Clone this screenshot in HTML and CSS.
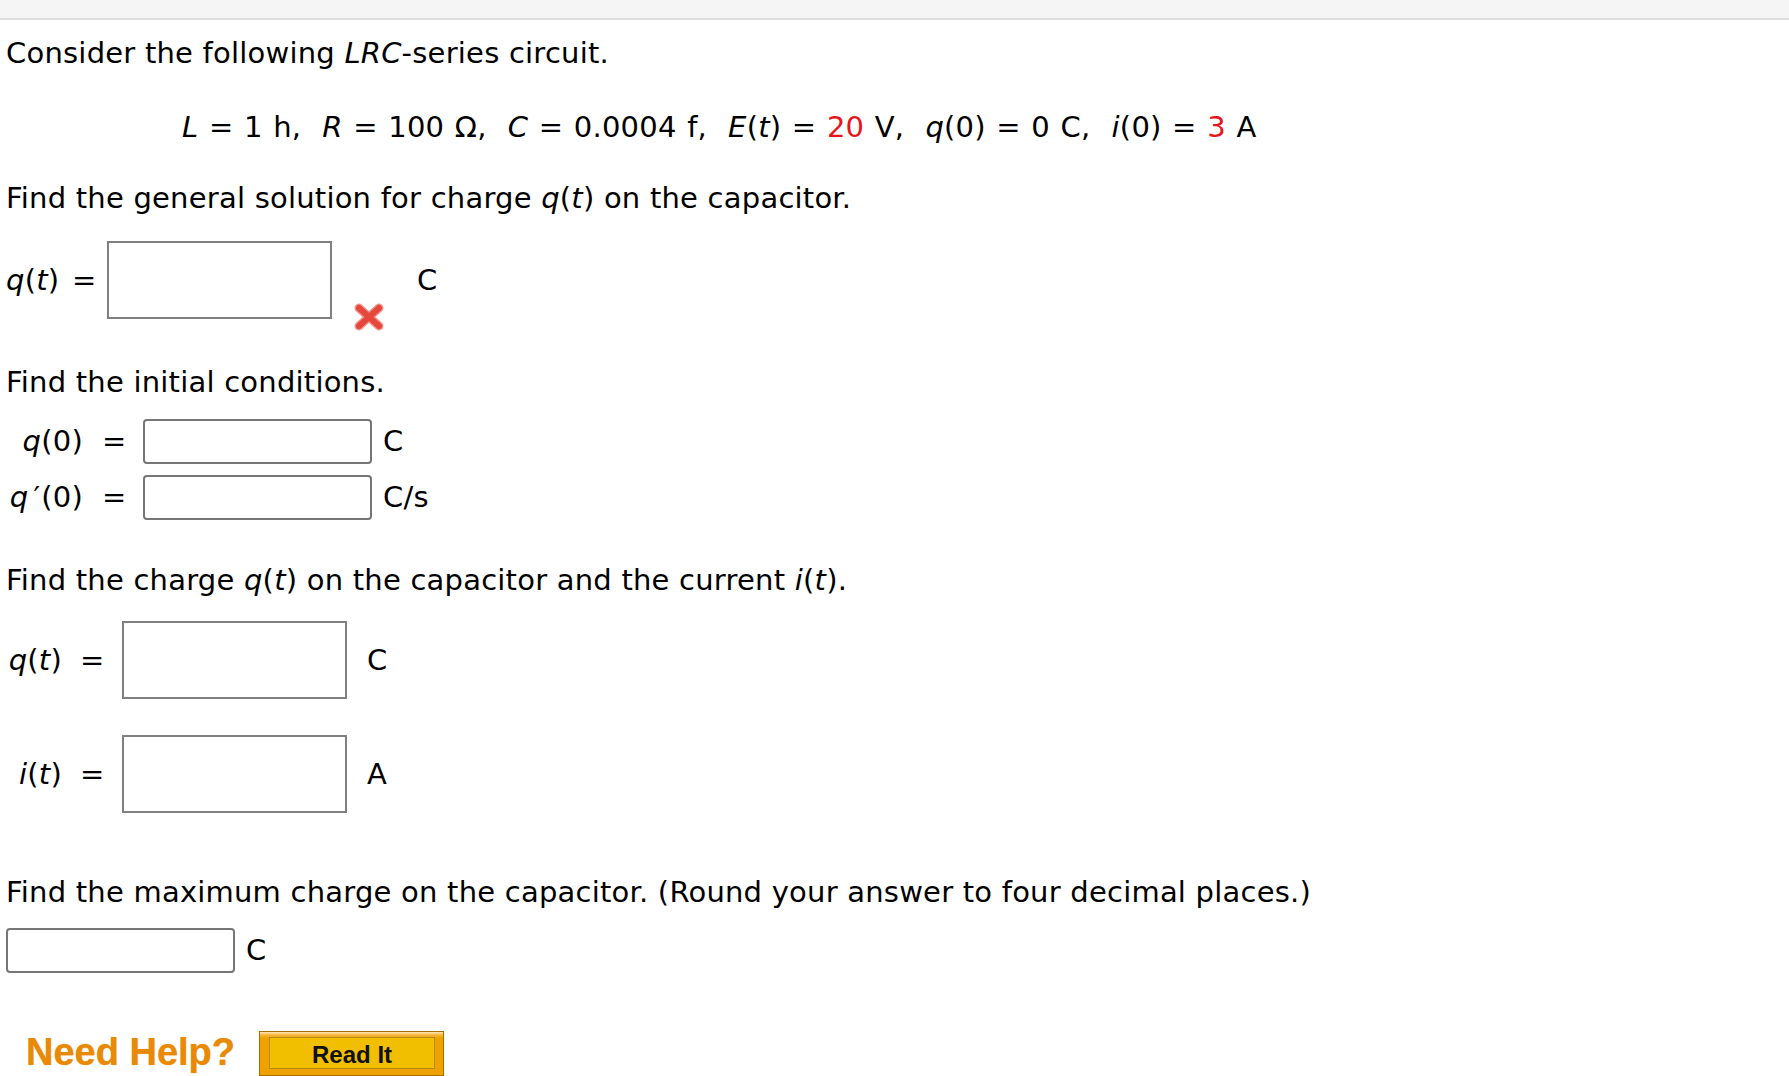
FILE: index.html
```html
<!DOCTYPE html>
<html lang="en">
<head>
<meta charset="utf-8">
<title>LRC-series circuit</title>
<link rel="stylesheet" href="styles.css">
</head>
<body>
<div class="topbar"></div>
<main class="content">
  <p class="line l-intro">Consider the following <i>LRC</i>-series circuit.</p>
  <p class="line l-eq"><i>L</i> = 1 h,&nbsp; <i>R</i> = 100 Ω,&nbsp; <i>C</i> = 0.0004 f,&nbsp; <i>E</i>(<i>t</i>) = <span class="red">20</span> V,&nbsp; <i>q</i>(0) = 0 C,&nbsp; <i>i</i>(0) = <span class="red">3</span> A</p>
  <p class="line l-gen">Find the general solution for charge <i>q</i>(<i>t</i>) on the capacitor.</p>
  <div class="row row-gen">
    <span class="lbl lbl-gen"><i>q</i>(<i>t</i>)</span><span class="eqs">=</span>
    <input type="text" class="ans ans-big ans-gen" aria-label="q(t)">
    <svg class="xmark" width="30" height="28" viewBox="0 0 30 28" aria-hidden="true">
      <path d="M5 5 L25 23 M25 5 L5 23" stroke="#f2938a" stroke-width="9" stroke-linecap="round" fill="none"/>
      <path d="M5 5 L25 23 M25 5 L5 23" stroke="#e5473c" stroke-width="6" stroke-linecap="round" fill="none"/>
    </svg>
    <span class="unit unit-gen">C</span>
  </div>

  <p class="line l-init">Find the initial conditions.</p>
  <div class="row row-init first">
    <span class="lbl lbl-init"><i>q</i>(0)</span><span class="eqs eqs-init">=</span>
    <input type="text" class="ans ans-small" aria-label="q(0)">
    <span class="unit unit-small">C</span>
  </div>
  <div class="row row-init second">
    <span class="lbl lbl-init"><i>q</i><span class="prime">′</span>(0)</span><span class="eqs eqs-init">=</span>
    <input type="text" class="ans ans-small" aria-label="q'(0)">
    <span class="unit unit-small">C/s</span>
  </div>

  <p class="line l-charge">Find the charge <i>q</i>(<i>t</i>) on the capacitor and the current <i>i</i>(<i>t</i>).</p>
  <div class="row row-charge first">
    <span class="lbl lbl-charge"><i>q</i>(<i>t</i>)</span><span class="eqs">=</span>
    <input type="text" class="ans ans-big ans-charge" aria-label="q(t)">
    <span class="unit unit-charge">C</span>
  </div>
  <div class="row row-charge second">
    <span class="lbl lbl-charge"><i>i</i>(<i>t</i>)</span><span class="eqs">=</span>
    <input type="text" class="ans ans-big ans-charge" aria-label="i(t)">
    <span class="unit unit-charge">A</span>
  </div>

  <p class="line l-max">Find the maximum charge on the capacitor. (Round your answer to four decimal places.)</p>
  <div class="row row-max">
    <input type="text" class="ans ans-small" aria-label="maximum charge">
    <span class="unit unit-small">C</span>
  </div>

  <div class="help">
    <span class="need">Need Help?</span>
    <span class="readit"><span class="readit-inner">Read It</span></span>
  </div>
</main>
</body>
</html>
```

FILE: styles.css
```css
html, body {
  margin: 0;
  padding: 0;
  background: #ffffff;
}

body {
  font-family: "DejaVu Sans", Verdana, sans-serif;
  font-size: 29px;
  line-height: 35px;
  letter-spacing: 0.22px;
  color: #000000;
  overflow: hidden;
}

.topbar {
  height: 18px;
  background: #f5f5f5;
  border-bottom: 2px solid #dedede;
}

.content {
  padding-left: 6px;
}

.line {
  margin: 0;
  white-space: nowrap;
}

.red {
  color: #e8141c;
}

.l-intro { margin-top: 16px; }
.l-eq { margin-top: 39px; padding-left: 176px; word-spacing: 1.1px; }
.l-gen { margin-top: 36px; }
.l-init { margin-top: 46px; }
.l-charge { margin-top: 43px; }
.l-max { margin-top: 62px; }

.row {
  display: flex;
  align-items: center;
}

.row-gen { margin-top: 25px; }
.row-init.first { margin-top: 19px; }
.row-init.second { margin-top: 11px; }
.row-charge.first { margin-top: 23px; }
.row-charge.second { margin-top: 36px; }
.row-max { margin-top: 18px; }

.lbl {
  display: inline-block;
  text-align: right;
  white-space: nowrap;
}

.prime {
  margin-left: 5px;
  margin-right: 1px;
}

.eqs {
  display: inline-block;
  width: 24px;
  text-align: center;
}

.lbl-gen { width: 60px; text-align: left; margin-right: 6px; }
.lbl-init { width: 77px; margin-right: 19px; }
.lbl-charge { width: 56px; margin-right: 18px; }

.ans {
  box-sizing: border-box;
  display: block;
  margin: 0;
  padding: 0;
  background: #ffffff;
  outline: none;
  font: inherit;
}

.ans-big {
  width: 225px;
  height: 78px;
  border: 2px solid #808080;
  border-radius: 0;
}

.ans-gen { margin-left: 11px; }
.ans-charge { margin-left: 18px; }

.ans-small {
  width: 229px;
  height: 45px;
  border: 2px solid #767676;
  border-radius: 4px;
}

.eqs-init + .ans-small { margin-left: 17px; }

.xmark {
  display: block;
  align-self: flex-end;
  margin-left: 22px;
  margin-bottom: -12px;
}

.unit-gen { margin-left: 33px; }
.unit-small { margin-left: 11px; }
.unit-charge { margin-left: 20px; }

.help {
  display: flex;
  align-items: flex-start;
  margin-top: 58px;
}

.need {
  font-family: "Liberation Sans", Arial, sans-serif;
  font-weight: bold;
  font-size: 38px;
  line-height: 45px;
  letter-spacing: 0;
  color: #e88a08;
  margin-left: 20px;
  margin-top: -1px;
  text-shadow: 0 0 1px rgba(232, 138, 8, 0.7);
}

.readit {
  box-sizing: border-box;
  display: flex;
  width: 185px;
  height: 45px;
  margin-left: 24px;
  padding: 5px 8px 6px 9px;
  border: 1px solid #a46d00;
  background: linear-gradient(#fde7b4 0px, #f6b73e 3px, #efa100 6px, #efa100 100%);
}

.readit-inner {
  flex: 1;
  display: flex;
  align-items: center;
  justify-content: center;
  border: 1px solid #b48a10;
  background: #f2bf00;
  font-family: "Liberation Sans", Arial, sans-serif;
  font-weight: bold;
  font-size: 24px;
  letter-spacing: 0;
  color: #111111;
  padding-top: 2px;
}
```
